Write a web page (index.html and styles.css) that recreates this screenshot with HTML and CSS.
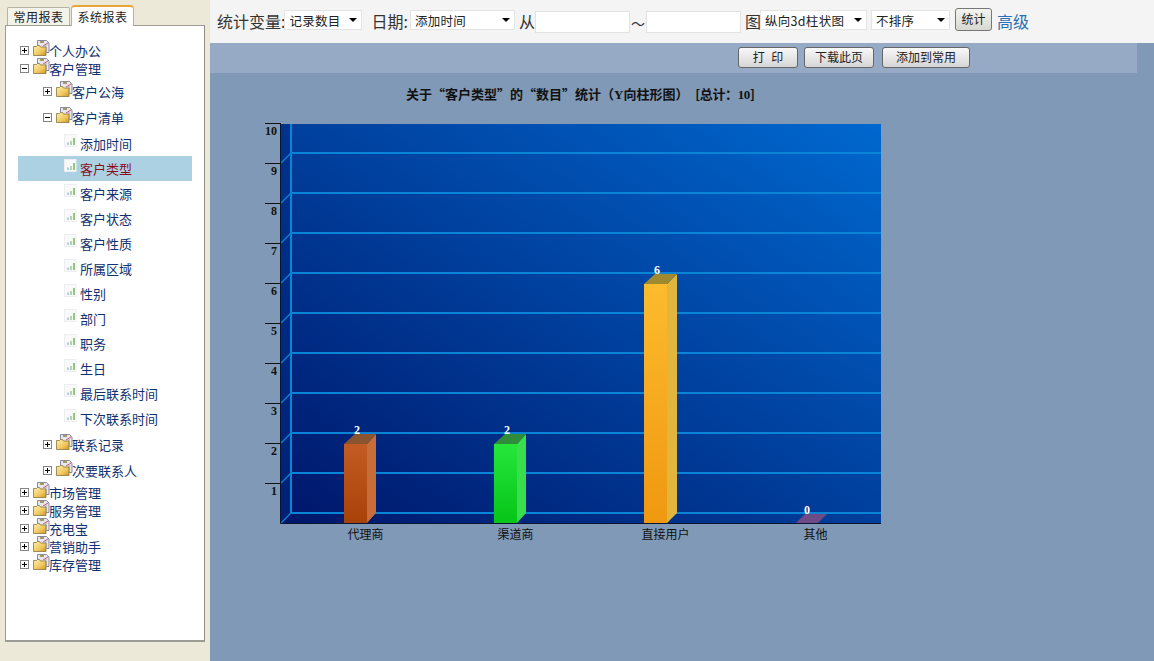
FILE: index.html
```html
<!DOCTYPE html>
<html lang="zh-CN">
<head>
<meta charset="UTF-8" />
<title>统计报表</title>
<link rel="stylesheet" href="styles.css">
</head>
<body>

<svg class="defs" width="0" height="0">
  <defs>
    <linearGradient id="fold" x1="0" y1="0" x2="1" y2="1">
      <stop offset="0" stop-color="#fdf0b0"/>
      <stop offset="0.6" stop-color="#f0c85c"/>
      <stop offset="1" stop-color="#c8962e"/>
    </linearGradient>
  </defs>
  <symbol id="folder" viewBox="0 0 17 17">
    <path d="M4.500 0.500h9l2.500 2.500v9.500h-11.500z" fill="#e6e6f0" stroke="#6e6e86" stroke-width="0.800"/>
    <path d="M7 2h4" stroke="#a89868" stroke-width="2"/>
    <path d="M10 6l5-3" stroke="#c85a6a" stroke-width="1"/>
    <path d="M13 5v8" stroke="#a8a8b8" stroke-width="1"/>
    <path d="M0.500 6.500h3l1-1h2l1 1.500h5.500v8.500h-12.500z" fill="url(#fold)" stroke="#8a7538" stroke-width="0.800"/>
  </symbol>
  <symbol id="leaf" viewBox="0 0 13 13">
    <rect x="0.500" y="0.500" width="11.500" height="12" fill="#f8fafa" stroke="#eeeef2"/>
    <rect x="3" y="8.500" width="2" height="2.500" fill="#b4cfe0"/>
    <rect x="6" y="7" width="2" height="4" fill="#b2d6a8"/>
    <rect x="9" y="4" width="2" height="7" fill="#96c482"/>
  </symbol>
</svg>

<div class="page">
  <aside class="side">
    <div class="tabs">
      <span class="tab">常用报表</span>
      <span class="tab tab-on">系统报表</span>
    </div>
    <div class="panel">
      <ul class="tree">
        <li class="row"><i class="box plus"></i><svg class="fld"><use href="#folder"/></svg>个人办公</li>
        <li class="row"><i class="box"></i><svg class="fld"><use href="#folder"/></svg>客户管理</li>
        <li>
          <ul class="sub">
            <li class="row row2"><i class="box plus"></i><svg class="fld"><use href="#folder"/></svg>客户公海</li>
            <li class="row row2"><i class="box"></i><svg class="fld"><use href="#folder"/></svg>客户清单</li>
            <li>
              <ul class="leaves">
                <li class="leaf"><svg class="lf"><use href="#leaf"/></svg>添加时间</li>
                <li class="leaf on"><svg class="lf"><use href="#leaf"/></svg>客户类型</li>
                <li class="leaf"><svg class="lf"><use href="#leaf"/></svg>客户来源</li>
                <li class="leaf"><svg class="lf"><use href="#leaf"/></svg>客户状态</li>
                <li class="leaf"><svg class="lf"><use href="#leaf"/></svg>客户性质</li>
                <li class="leaf"><svg class="lf"><use href="#leaf"/></svg>所属区域</li>
                <li class="leaf"><svg class="lf"><use href="#leaf"/></svg>性别</li>
                <li class="leaf"><svg class="lf"><use href="#leaf"/></svg>部门</li>
                <li class="leaf"><svg class="lf"><use href="#leaf"/></svg>职务</li>
                <li class="leaf"><svg class="lf"><use href="#leaf"/></svg>生日</li>
                <li class="leaf"><svg class="lf"><use href="#leaf"/></svg>最后联系时间</li>
                <li class="leaf"><svg class="lf"><use href="#leaf"/></svg>下次联系时间</li>
              </ul>
            </li>
            <li class="row row2"><i class="box plus"></i><svg class="fld"><use href="#folder"/></svg>联系记录</li>
            <li class="row row2"><i class="box plus"></i><svg class="fld"><use href="#folder"/></svg>次要联系人</li>
          </ul>
        </li>
        <li class="row"><i class="box plus"></i><svg class="fld"><use href="#folder"/></svg>市场管理</li>
        <li class="row"><i class="box plus"></i><svg class="fld"><use href="#folder"/></svg>服务管理</li>
        <li class="row"><i class="box plus"></i><svg class="fld"><use href="#folder"/></svg>充电宝</li>
        <li class="row"><i class="box plus"></i><svg class="fld"><use href="#folder"/></svg>营销助手</li>
        <li class="row"><i class="box plus"></i><svg class="fld"><use href="#folder"/></svg>库存管理</li>
      </ul>
    </div>
  </aside>

  <main class="main">
    <form class="filter">
      <label class="lbl lbl-first">统计变量:</label>
      <span class="sel w78"><select><option>记录数目</option></select></span>
      <label class="lbl lbl-date">日期:</label>
      <span class="sel w105"><select><option>添加时间</option></select></span>
      <label class="lbl ml4">从</label>
      <input class="date" type="text" />
      <label class="lbl tilde">～</label>
      <input class="date" type="text" />
      <label class="lbl lbl-type">图</label>
      <span class="sel w107"><select><option>纵向3d柱状图</option></select></span>
      <span class="sel w79"><select><option>不排序</option></select></span>
      <button class="go" type="button">统计</button>
      <a class="more" href="#">高级</a>
    </form>

    <div class="tools">
      <button class="tool print" type="button">打 印</button>
      <button class="tool w70" type="button">下载此页</button>
      <button class="tool w88" type="button">添加到常用</button>
    </div>

    <h2 class="title">关于“客户类型”的“数目”统计（<b>Y</b>向柱形图） <span>[总计：<b>10</b>]</span></h2>

    <svg class="chart" width="640" height="435" viewBox="250 115 640 435">
      <defs>
        <linearGradient id="wall" x1="0" y1="1" x2="1" y2="0">
          <stop offset="0" stop-color="#00166a"/>
          <stop offset="1" stop-color="#0068cf"/>
        </linearGradient>
        <linearGradient id="orange" x1="0" y1="0" x2="0" y2="1">
          <stop offset="0" stop-color="#c25c24"/>
          <stop offset="1" stop-color="#a84208"/>
        </linearGradient>
        <linearGradient id="green" x1="0" y1="0" x2="0" y2="1">
          <stop offset="0" stop-color="#26e63c"/>
          <stop offset="1" stop-color="#06c418"/>
        </linearGradient>
        <linearGradient id="yellow" x1="0" y1="0" x2="0" y2="1">
          <stop offset="0" stop-color="#fdbb2e"/>
          <stop offset="1" stop-color="#ef9810"/>
        </linearGradient>
      </defs>

      <rect x="281" y="124" width="600" height="399" fill="url(#wall)"/>
      <path d="M281 124h10v389l-10 10z" fill="#002a80" opacity="0.55"/>

      <g stroke="#0a84d6" stroke-width="2" fill="none">
        <path d="M291 124v389"/>
        <path d="M291 153H881M291 193H881M291 233H881M291 273H881M291 313H881M291 353H881M291 393H881M291 433H881M291 473H881M291 513H881"/>
      </g>
      <path d="M281 163l10-10M281 203l10-10M281 243l10-10M281 283l10-10M281 323l10-10M281 363l10-10M281 403l10-10M281 443l10-10M281 483l10-10M281 523l10-10" stroke="#0a84d6" stroke-width="1.300" fill="none"/>

      <path d="M280.500 123V523.500H881" stroke="#0a1630" fill="none"/>
      <path d="M265 123.500h16M265 163.500h16M265 203.500h16M265 243.500h16M265 283.500h16M265 323.500h16M265 363.500h16M265 403.500h16M265 443.500h16M265 483.500h16" stroke="#111" fill="none"/>

      <g class="yaxis">
        <text x="277" y="135">10</text>
        <text x="277" y="175">9</text>
        <text x="277" y="215">8</text>
        <text x="277" y="255">7</text>
        <text x="277" y="295">6</text>
        <text x="277" y="335">5</text>
        <text x="277" y="375">4</text>
        <text x="277" y="415">3</text>
        <text x="277" y="455">2</text>
        <text x="277" y="495">1</text>
      </g>

      <rect x="344" y="444" width="23" height="79" fill="url(#orange)"/>
      <path d="M367 444l9-10v79l-9 10z" fill="#c86c38"/>
      <path d="M344 444l11-10h21l-9 10z" fill="#8a5430"/>

      <rect x="494" y="444" width="23" height="79" fill="url(#green)"/>
      <path d="M517 444l9-10v79l-9 10z" fill="#38de4c"/>
      <path d="M494 444l11-10h21l-9 10z" fill="#2e8c3a"/>

      <rect x="644" y="284" width="23" height="239" fill="url(#yellow)"/>
      <path d="M667 284l10-10v239l-10 10z" fill="#e2b63c"/>
      <path d="M644 284l11-10h22l-10 10z" fill="#a08a30"/>

      <path d="M796 523l9-9h22l-9 9z" fill="#6e4a86"/>

      <g class="vals">
        <text x="357" y="434">2</text>
        <text x="507" y="434">2</text>
        <text x="657" y="274">6</text>
        <text x="807" y="514">0</text>
      </g>

      <g class="cats">
        <text x="365.500" y="539">代理商</text>
        <text x="515.500" y="539">渠道商</text>
        <text x="665.500" y="539">直接用户</text>
        <text x="815.500" y="539">其他</text>
      </g>
    </svg>
  </main>
</div>

</body>
</html>
```

FILE: styles.css
```css
html, body {
  margin: 0;
  height: 100%;
}
body {
  font-family: "Noto Sans CJK SC", "Liberation Sans", sans-serif;
  font-size: 12px;
  background: #7f99b6;
  overflow: hidden;
}
ul {
  list-style: none;
  margin: 0;
  padding: 0;
}
.defs {
  position: absolute;
}
.page {
  display: flex;
  height: 661px;
}

/* left side */
.side {
  width: 205px;
  padding-left: 5px;
  background: #ece9d8;
  flex: none;
}
.tabs {
  display: flex;
  height: 25px;
  padding-left: 2px;
  align-items: flex-end;
}
.tab {
  width: 61px;
  height: 17px;
  line-height: 17px;
  text-align: center;
  letter-spacing: 0.5px;
  color: #222;
  background: #f4f3ea;
  border: 1px solid #b5b3a5;
  border-bottom: 0;
  border-radius: 2px 2px 0 0;
  margin-right: 1px;
}
.tab-on {
  height: 19px;
  line-height: 20px;
  margin-bottom: -1px;
  position: relative;
  background: #fff;
  border-top: 2px solid #e8a53c;
  border-radius: 4px 4px 0 0;
  z-index: 1;
}
.panel {
  width: 198px;
  background: #fff;
  border: 1px solid #9c9c94;
  border-right-color: #8e8e88;
  border-bottom: 2px solid #9c9c94;
  padding-top: 15px;
  height: 599px;
}
.tree {
  color: #12306e;
  font-size: 13px;
}
.row {
  display: flex;
  align-items: center;
  height: 18px;
  padding-left: 14px;
  white-space: nowrap;
}
.row2 {
  height: 26px;
  padding-left: 37px;
}
.box {
  width: 9px;
  height: 9px;
  box-sizing: border-box;
  border: 1px solid #848484;
  background: linear-gradient(#000, #000) center / 5px 1px no-repeat, #fff;
  margin-right: 4px;
  flex: none;
}
.box.plus {
  background: linear-gradient(#000, #000) center / 5px 1px no-repeat,
    linear-gradient(#000, #000) center / 1px 5px no-repeat, #fff;
}
.fld {
  width: 17px;
  height: 17px;
  margin: -3px -1px 0 0;
  flex: none;
}
.sub {
  padding-top: 1px;
}
.leaves {
  margin-top: 1px;
}
.leaf {
  display: flex;
  align-items: center;
  height: 25px;
  margin: 0 12px;
  padding-left: 46px;
  white-space: nowrap;
}
.leaf.on {
  background: #acd1e3;
  color: #8a0f1e;
}
.lf {
  width: 13px;
  height: 13px;
  margin: -6px 3px 0 0;
  flex: none;
}

/* right side */
.main {
  flex: 1;
  min-width: 0;
}
.filter {
  display: flex;
  align-items: center;
  height: 43px;
  padding-left: 7px;
  background: #f4f4f4;
  box-sizing: border-box;
}
.lbl {
  font-size: 16px;
  color: #333;
  white-space: nowrap;
  margin-top: -2px;
}
.lbl-first {
  margin-right: -1px;
}
.lbl-date {
  margin: -2px 2px 0 9px;
}
.lbl-type {
  margin: -2px -1px 0 4px;
}
.ml4 {
  margin-left: 4px;
}
.tilde {
  width: 16px;
  text-align: center;
  font-size: 14px;
  margin-top: 2px;
}
.sel {
  display: block;
  position: relative;
  height: 20px;
  margin-top: -4px;
  flex: none;
  background: #fff;
  border: 1px solid #e4e4e4;
  box-sizing: border-box;
}
.sel::after {
  content: "";
  position: absolute;
  right: 4px;
  top: 7px;
  border: 4px solid transparent;
  border-top: 4px solid #000;
  border-bottom: 0;
}
.sel select {
  appearance: none;
  border: 0;
  background: none;
  width: 100%;
  height: 18px;
  padding: 0 0 0 4px;
  font: 12.5px "Noto Sans CJK SC", sans-serif;
  letter-spacing: 0.3px;
  color: #222;
}
.w78 { width: 78px; }
.w105 { width: 105px; }
.w107 { width: 107px; }
.w79 { width: 79px; margin-left: 4px; }
.date {
  width: 95px;
  height: 22px;
  box-sizing: border-box;
  border: 1px solid #e2e2e2;
  background: #fff;
  padding: 0;
}
.go {
  width: 37px;
  height: 23px;
  margin: -4px 0 0 5px;
  padding: 0 0 2px;
  font: 12px "Noto Sans CJK SC", sans-serif;
  color: #222;
  background: linear-gradient(#f4f4f0, #d8d8d2);
  border: 1px solid #777;
  border-radius: 3px;
}
.more {
  margin-left: 5px;
  font-size: 16px;
  color: #2a6fb5;
  text-decoration: none;
  margin-top: -2px;
}
.tools {
  display: flex;
  gap: 6px;
  align-items: center;
  height: 30px;
  width: 927px;
  padding-left: 528px;
  box-sizing: border-box;
  background: #96aac5;
}
.tool {
  height: 21px;
  margin-top: -2px;
  padding: 0 0 2px;
  font: 12px "Noto Sans CJK SC", sans-serif;
  color: #222;
  background: linear-gradient(#f8f8f8, #d6d6d6);
  border: 1px solid #666;
  border-radius: 3px;
}
.print {
  width: 60px;
  word-spacing: 4px;
}
.w70 { width: 70px; }
.w88 { width: 88px; margin-left: 2px; }
.title {
  margin: 12px 0 0 196px;
  height: 18px;
  line-height: 18px;
  font-size: 13px;
  font-weight: bold;
  color: #111;
  white-space: nowrap;
}
.title b {
  font-family: "Liberation Serif", serif;
}
.title span {
  margin-left: 4px;
  letter-spacing: -0.4px;
}
.chart {
  display: block;
  margin: 12px 0 0 40px;
}
.yaxis text {
  font: bold 12px "Liberation Serif", serif;
  fill: #111;
  text-anchor: end;
}
.vals text {
  font: bold 12px "Liberation Serif", serif;
  fill: #fff;
  text-anchor: middle;
}
.cats text {
  font: 12px "Noto Sans CJK SC", sans-serif;
  fill: #111;
  text-anchor: middle;
}
```
